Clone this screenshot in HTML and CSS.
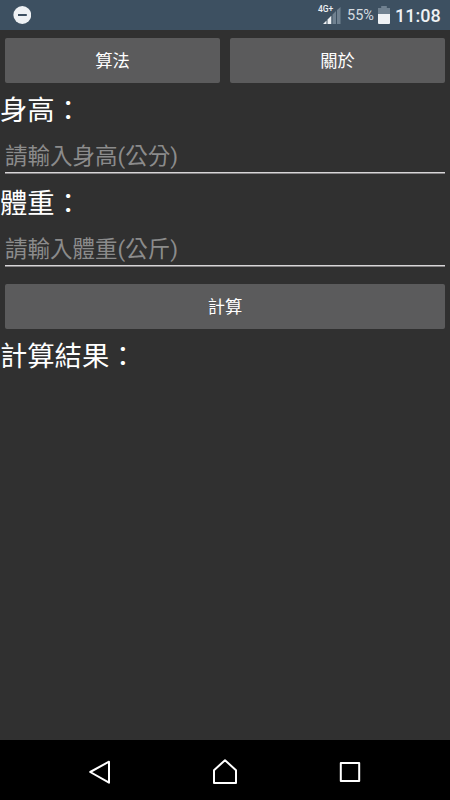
FILE: index.html
```html
<!DOCTYPE html>
<html lang="zh-Hant">
<head>
<meta charset="utf-8">
<title>BMI</title>
<link rel="stylesheet" href="styles.css">
</head>
<body>
<header class="status">
  <svg class="dnd" width="18" height="18" viewBox="0 0 18 18"><circle cx="9.3" cy="9" r="8.9" fill="#eef1f4"/><path d="M5 9h8.8" stroke="#3d5061" stroke-width="2"/></svg>
  <div class="signal">
    <span class="network">4G+</span>
    <svg class="bars" width="18" height="17" viewBox="0 0 18 17"><path d="M0 17L3.5 13.5V17z M4.5 12.5L8.3 8.7V17H4.5z" fill="#eef1f4"/><path d="M9.5 7.5L13 4V17H9.5z M14 3L17.5 0V17H14z" fill="#708190"/></svg>
  </div>
  <span class="percent">55%</span>
  <svg class="battery" width="12" height="18" viewBox="0 0 12 18"><path d="M3.2 0h5.6v2H12v6H0V2h3.2z" fill="#708190"/><path d="M0 8h12v9a1 1 0 0 1-1 1H1a1 1 0 0 1-1-1z" fill="#eef1f4"/></svg>
  <span class="clock">11:08</span>
</header>
<main class="content">
  <div class="button-row">
    <button class="button">算法</button>
    <button class="button">關於</button>
  </div>
  <div class="group">
    <label class="label" for="height">身高：</label>
    <input class="field" id="height" placeholder="請輸入身高(公分)">
  </div>
  <div class="group">
    <label class="label" for="weight">體重：</label>
    <input class="field" id="weight" placeholder="請輸入體重(公斤)">
  </div>
  <button class="button calculate">計算</button>
  <div class="label result">計算結果：</div>
</main>
<nav class="navbar">
  <svg width="24" height="28" viewBox="0 0 24 28"><path d="M2.2 14L21 3.7V24.7z" fill="none" stroke="#fff" stroke-width="2" stroke-linejoin="round"/></svg>
  <svg width="26" height="28" viewBox="0 0 26 28"><path d="M2 25V12.2L13 2.2l11 10V25z" fill="none" stroke="#fff" stroke-width="2" stroke-linejoin="round"/></svg>
  <svg width="24" height="28" viewBox="0 0 24 28"><rect x="2.8" y="5" width="18.4" height="18" fill="none" stroke="#fff" stroke-width="2" stroke-linejoin="round"/></svg>
</nav>
</body>
</html>
```

FILE: styles.css
```css
* { box-sizing: border-box; }

body {
  margin: 0;
  height: 800px;
  display: flex;
  flex-direction: column;
  overflow: hidden;
  background: #303030;
  color: #fff;
  font-family: Roboto, "Noto Sans CJK TC", sans-serif;
}

.status {
  height: 30px;
  flex: none;
  display: flex;
  align-items: center;
  padding: 0 10px 0 13px;
  background: #3d5061;
  color: #eef1f4;
}

.signal {
  position: relative;
  width: 24px;
  height: 20px;
  margin-left: auto;
}

.network {
  position: absolute;
  left: 0;
  top: 0;
  font-size: 8.5px;
  line-height: 8px;
  font-weight: 500;
}

.bars {
  position: absolute;
  left: 5px;
  top: 2px;
}

.percent {
  width: 28px;
  margin-left: 5px;
  padding-top: 1px;
  font-size: 14.5px;
  color: #d5dbe0;
}

.battery { margin-left: 3px; }

.clock {
  width: 45px;
  margin-left: 5px;
  font-size: 18px;
  font-weight: 500;
}

.content {
  flex: 1;
  display: flex;
  flex-direction: column;
  padding-top: 8px;
}

.button-row {
  display: flex;
  gap: 10px;
  padding: 0 5px;
  margin-bottom: -2px;
}

.button {
  flex: 1;
  height: 45px;
  padding: 2px 0 0;
  border: 0;
  border-radius: 2px;
  background: #5b5b5c;
  color: #fff;
  font: 17.3px/43px Roboto, "Noto Sans CJK TC", sans-serif;
}

.group {
  height: 93px;
  display: flex;
  flex-direction: column;
  padding-top: 11px;
}

.label {
  height: 38px;
  font-size: 27.3px;
  line-height: 38px;
}

.field {
  height: 38px;
  margin: 6px 5px 0;
  padding: 2px 0 0;
  border: 0;
  outline: 0;
  background: linear-gradient(#d8d6d8 50%, #858385 50%) bottom / 100% 2px no-repeat;
  color: #fff;
  font: 22.5px/36px Roboto, "Noto Sans CJK TC", sans-serif;
}

.field::placeholder { color: #8b8b8b; opacity: 1; }

.calculate {
  flex: none;
  margin: 17px 5px 0;
}

.result { margin-top: 9px; }

.navbar {
  height: 60px;
  flex: none;
  display: flex;
  justify-content: space-between;
  align-items: center;
  padding: 3px 88px 0;
  background: #000;
}
```
